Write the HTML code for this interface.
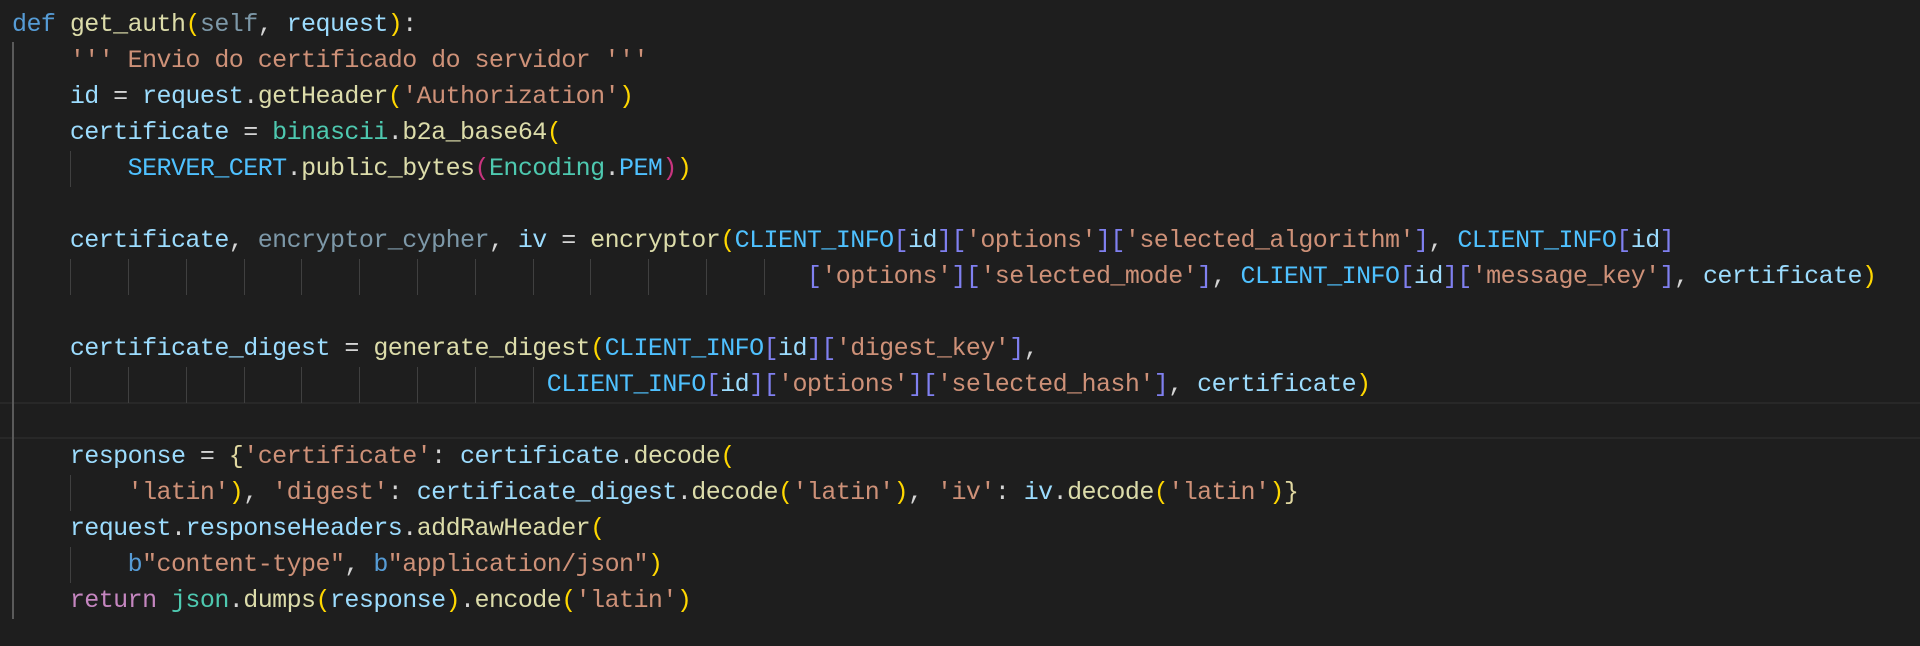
<!DOCTYPE html>
<html><head><meta charset="utf-8"><style>
html,body{margin:0;padding:0;background:#1e1e1e;width:1920px;height:646px;overflow:hidden}
.ed{position:relative;width:1920px;height:646px;font-family:"Liberation Mono","DejaVu Sans Mono",monospace;font-size:25px;letter-spacing:-0.55px;color:#d4d4d4}
.l{position:absolute;left:12px;height:36px;line-height:36px;white-space:pre}
.g{position:absolute;width:1px;height:36px;background:#404040}
.g0{position:absolute;left:12px;width:2px;background:#5a5a5a}
.hl{position:absolute;left:0;width:1920px;top:402px;height:33px;border-top:2px solid #282828;border-bottom:2px solid #282828}
.k{color:#569cd6}.f{color:#dcdcaa}.v{color:#9cdcfe}.d{color:#7d98a8}.s{color:#ce9178}.t{color:#4ec9b0}.c{color:#4fc1ff}.y{color:#ffd700}.m{color:#c8347e}.b{color:#8080f0}.r{color:#c586c0}.w{color:#e0d7a0}
</style></head><body><div class="ed">
<div class="hl"></div>
<div class="g0" style="top:42px;height:577px"></div>
<div class="l" style="top:6.5px"><span class="k">def</span> <span class="f">get_auth</span><span class="y">(</span><span class="d">self</span>, <span class="v">request</span><span class="y">)</span>:</div>
<div class="l" style="top:42.5px">    <span class="s">''' Envio do certificado do servidor '''</span></div>
<div class="l" style="top:78.5px">    <span class="v">id</span> = <span class="v">request</span>.<span class="f">getHeader</span><span class="y">(</span><span class="s">'Authorization'</span><span class="y">)</span></div>
<div class="l" style="top:114.5px">    <span class="v">certificate</span> = <span class="t">binascii</span>.<span class="f">b2a_base64</span><span class="y">(</span></div>
<div class="l" style="top:150.5px">        <span class="c">SERVER_CERT</span>.<span class="f">public_bytes</span><span class="m">(</span><span class="t">Encoding</span>.<span class="c">PEM</span><span class="m">)</span><span class="y">)</span></div>
<div class="l" style="top:222.5px">    <span class="v">certificate</span>, <span class="d">encryptor_cypher</span>, <span class="v">iv</span> = <span class="f">encryptor</span><span class="y">(</span><span class="c">CLIENT_INFO</span><span class="b">[</span><span class="v">id</span><span class="b">][</span><span class="s">'options'</span><span class="b">][</span><span class="s">'selected_algorithm'</span><span class="b">]</span>, <span class="c">CLIENT_INFO</span><span class="b">[</span><span class="v">id</span><span class="b">]</span></div>
<div class="l" style="top:258.5px">                                                       <span class="b">[</span><span class="s">'options'</span><span class="b">][</span><span class="s">'selected_mode'</span><span class="b">]</span>, <span class="c">CLIENT_INFO</span><span class="b">[</span><span class="v">id</span><span class="b">][</span><span class="s">'message_key'</span><span class="b">]</span>, <span class="v">certificate</span><span class="y">)</span></div>
<div class="l" style="top:330.5px">    <span class="v">certificate_digest</span> = <span class="f">generate_digest</span><span class="y">(</span><span class="c">CLIENT_INFO</span><span class="b">[</span><span class="v">id</span><span class="b">][</span><span class="s">'digest_key'</span><span class="b">]</span>,</div>
<div class="l" style="top:366.5px">                                     <span class="c">CLIENT_INFO</span><span class="b">[</span><span class="v">id</span><span class="b">][</span><span class="s">'options'</span><span class="b">][</span><span class="s">'selected_hash'</span><span class="b">]</span>, <span class="v">certificate</span><span class="y">)</span></div>
<div class="l" style="top:438.5px">    <span class="v">response</span> = <span class="w">{</span><span class="s">'certificate'</span>: <span class="v">certificate</span>.<span class="f">decode</span><span class="y">(</span></div>
<div class="l" style="top:474.5px">        <span class="s">'latin'</span><span class="y">)</span>, <span class="s">'digest'</span>: <span class="v">certificate_digest</span>.<span class="f">decode</span><span class="y">(</span><span class="s">'latin'</span><span class="y">)</span>, <span class="s">'iv'</span>: <span class="v">iv</span>.<span class="f">decode</span><span class="y">(</span><span class="s">'latin'</span><span class="y">)</span><span class="w">}</span></div>
<div class="l" style="top:510.5px">    <span class="v">request</span>.<span class="v">responseHeaders</span>.<span class="f">addRawHeader</span><span class="y">(</span></div>
<div class="l" style="top:546.5px">        <span class="k">b</span><span class="s">"content-type"</span>, <span class="k">b</span><span class="s">"application/json"</span><span class="y">)</span></div>
<div class="l" style="top:582.5px">    <span class="r">return</span> <span class="t">json</span>.<span class="f">dumps</span><span class="y">(</span><span class="v">response</span><span class="y">)</span>.<span class="f">encode</span><span class="y">(</span><span class="s">'latin'</span><span class="y">)</span></div>
<div class="g" style="left:70px;top:150.5px"></div>
<div class="g" style="left:70px;top:258.5px"></div><div class="g" style="left:128px;top:258.5px"></div><div class="g" style="left:186px;top:258.5px"></div><div class="g" style="left:244px;top:258.5px"></div><div class="g" style="left:301px;top:258.5px"></div><div class="g" style="left:359px;top:258.5px"></div><div class="g" style="left:417px;top:258.5px"></div><div class="g" style="left:475px;top:258.5px"></div><div class="g" style="left:533px;top:258.5px"></div><div class="g" style="left:590px;top:258.5px"></div><div class="g" style="left:648px;top:258.5px"></div><div class="g" style="left:706px;top:258.5px"></div><div class="g" style="left:764px;top:258.5px"></div>
<div class="g" style="left:70px;top:366.5px"></div><div class="g" style="left:128px;top:366.5px"></div><div class="g" style="left:186px;top:366.5px"></div><div class="g" style="left:244px;top:366.5px"></div><div class="g" style="left:301px;top:366.5px"></div><div class="g" style="left:359px;top:366.5px"></div><div class="g" style="left:417px;top:366.5px"></div><div class="g" style="left:475px;top:366.5px"></div><div class="g" style="left:533px;top:366.5px"></div>
<div class="g" style="left:70px;top:474.5px"></div>
<div class="g" style="left:70px;top:546.5px"></div>
</div></body></html>
